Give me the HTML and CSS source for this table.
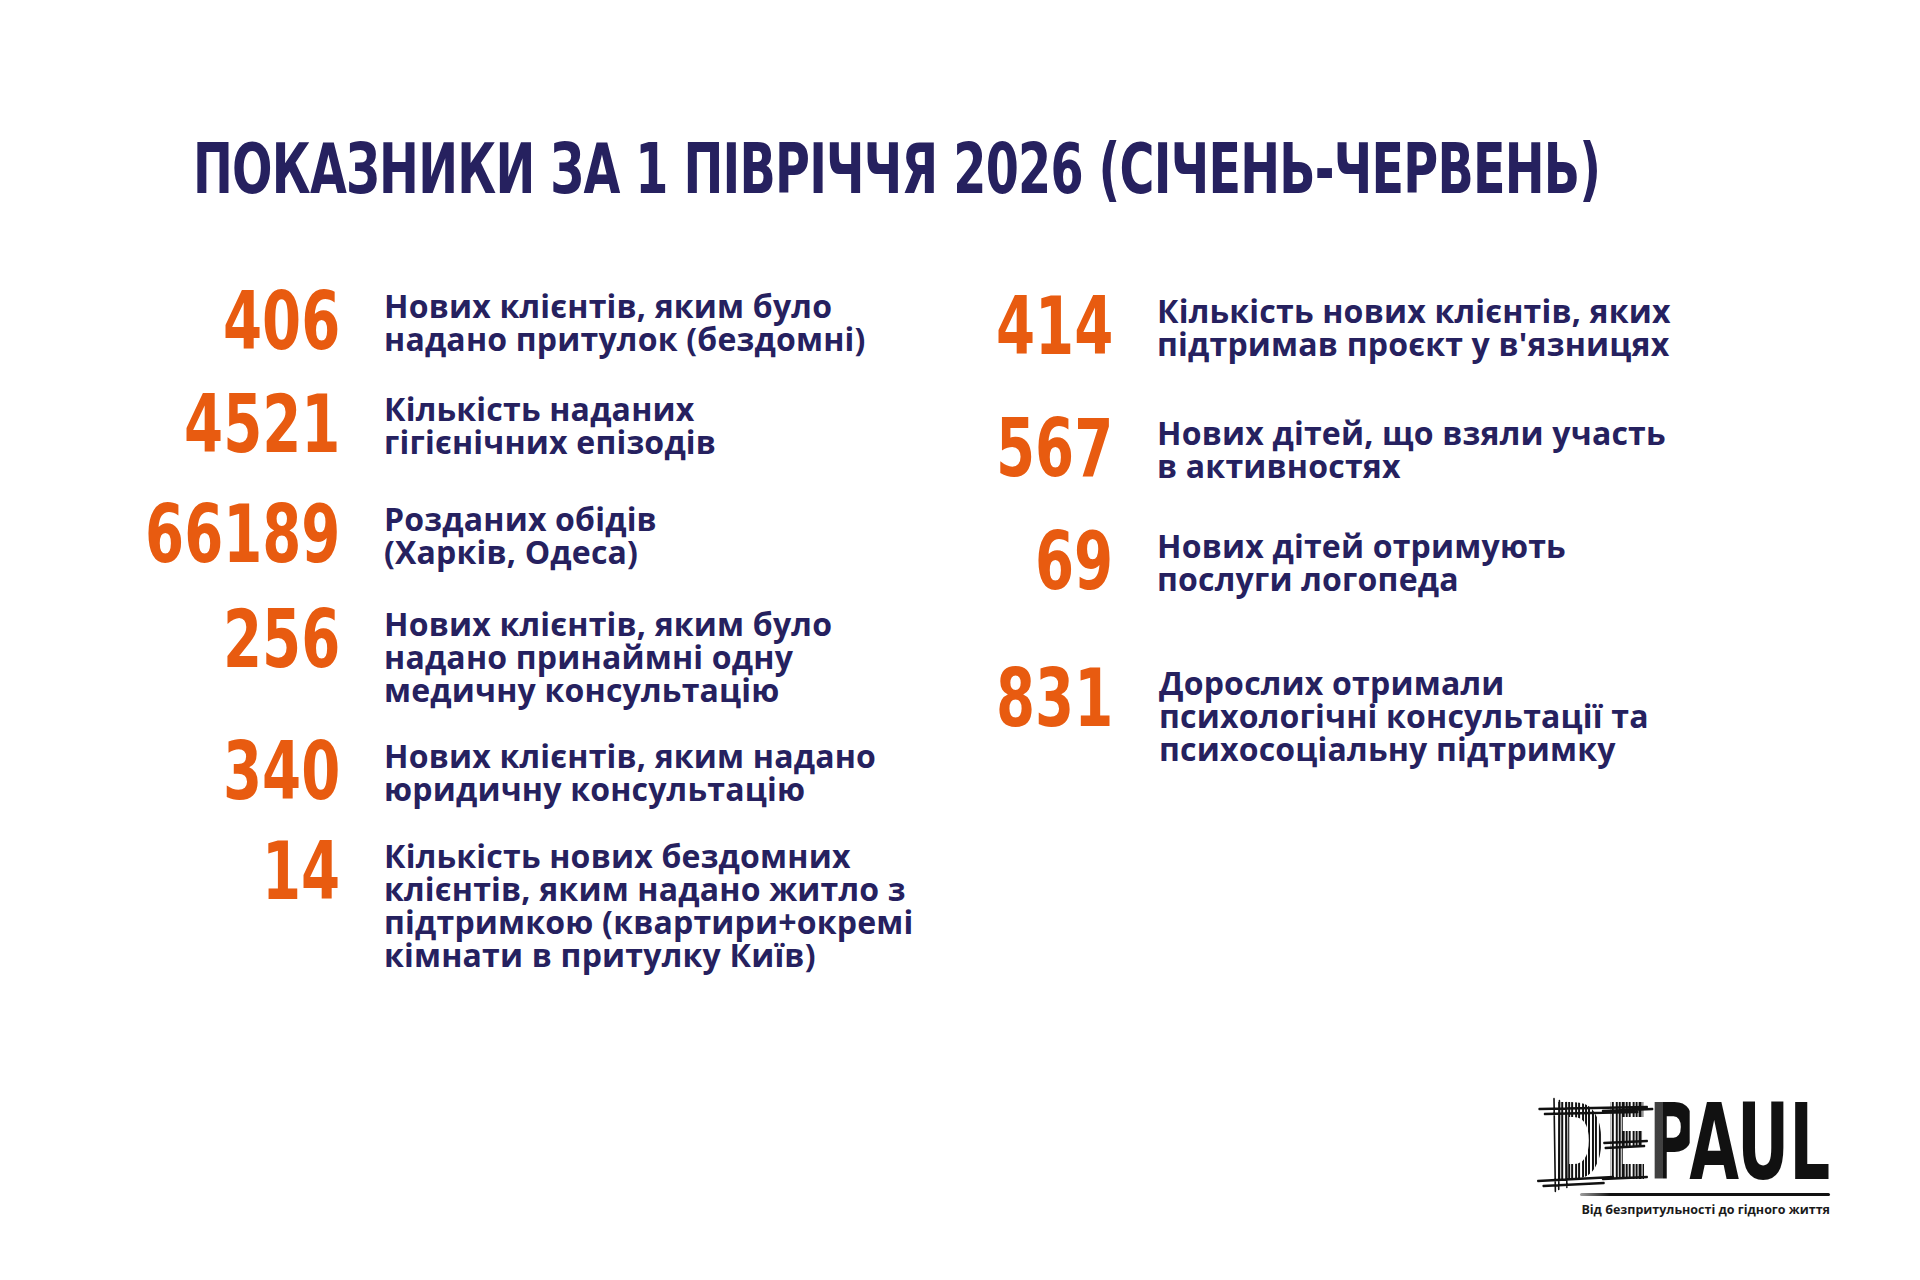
FILE: index.html
```html
<!DOCTYPE html>
<html lang="uk">
<head>
<meta charset="utf-8">
<title>Показники за 1 півріччя 2026</title>
<link rel="stylesheet" href="styles.css">
</head>
<body>
<div class="page">
  <h1 class="title"><span class="title-inner">ПОКАЗНИКИ ЗА 1 ПІВРІЧЧЯ 2026 (СІЧЕНЬ-ЧЕРВЕНЬ)</span></h1>
  <div class="stats">
    <div class="col col-left">
      <div class="stat">
        <div class="num"><span class="digits">406</span></div>
        <div class="txt">Нових клієнтів, яким було<br>надано притулок (бездомні)</div>
      </div>
      <div class="stat l2">
        <div class="num"><span class="digits">4521</span></div>
        <div class="txt">Кількість наданих<br>гігієнічних епізодів</div>
      </div>
      <div class="stat l3">
        <div class="num"><span class="digits">66189</span></div>
        <div class="txt">Розданих обідів<br>(Харків, Одеса)</div>
      </div>
      <div class="stat l4">
        <div class="num"><span class="digits">256</span></div>
        <div class="txt">Нових клієнтів, яким було<br>надано принаймні одну<br>медичну консультацію</div>
      </div>
      <div class="stat l5">
        <div class="num"><span class="digits">340</span></div>
        <div class="txt">Нових клієнтів, яким надано<br>юридичну консультацію</div>
      </div>
      <div class="stat l6">
        <div class="num"><span class="digits">14</span></div>
        <div class="txt">Кількість нових бездомних<br>клієнтів, яким надано житло з<br>підтримкою (квартири+окремі<br>кімнати в притулку Київ)</div>
      </div>
    </div>
    <div class="col col-right">
      <div class="stat">
        <div class="num"><span class="digits">414</span></div>
        <div class="txt">Кількість нових клієнтів, яких<br>підтримав проєкт у в'язницях</div>
      </div>
      <div class="stat r2">
        <div class="num"><span class="digits">567</span></div>
        <div class="txt">Нових дітей, що взяли участь<br>в активностях</div>
      </div>
      <div class="stat r3">
        <div class="num"><span class="digits">69</span></div>
        <div class="txt">Нових дітей отримують<br>послуги логопеда</div>
      </div>
      <div class="stat r4">
        <div class="num"><span class="digits">831</span></div>
        <div class="txt txt-shift">Дорослих отримали<br>психологічні консультації та<br>психосоціальну підтримку</div>
      </div>
    </div>
  </div>
  <footer class="logo">
    <div class="logo-word"><span class="sk">DE</span><span class="sk-p">P</span>AUL<svg class="scratch" viewBox="0 0 170 90" width="170" height="90" aria-hidden="true">
        <path d="M-10 6 L150 4 M-2 11 L136 9 M-12 78 L100 74 M-4 83 L86 80 M12 -4 L14 88 M20 -2 L19 86 M30 0 L31 84 M86 40 L150 38 M88 45 L146 43 M84 8 L158 6 M84 76 L150 74" stroke="#111" stroke-width="2.4" fill="none" stroke-linecap="round"/>
      </svg></div>
    <div class="logo-rule"></div>
    <div class="logo-tag">Від безпритульності до гідного життя</div>
  </footer>
</div>
</body>
</html>
```
FILE: styles.css
```css
html, body {
  margin: 0;
  padding: 0;
  background: #ffffff;
}

.page {
  width: 1920px;
  height: 1280px;
  box-sizing: border-box;
  padding: 134px 90px 62px 0;
  display: flex;
  flex-direction: column;
  overflow: hidden;
}

.title {
  margin: 0 0 0 193px;
  font-family: "DejaVu Sans Condensed", "Liberation Sans", sans-serif;
  font-weight: 700;
  font-size: 70px;
  line-height: 70px;
  color: #26215f;
  white-space: nowrap;
}

.title-inner {
  display: inline-block;
  letter-spacing: -1px;
  transform: scaleX(0.756);
  transform-origin: left center;
}

.stats {
  display: flex;
  margin-top: 85px;
  padding-left: 80px;
}

.col {
  display: flex;
  flex-direction: column;
}

.col-left {
  width: 773px;
  flex: none;
}

.col-right {
  flex: none;
  padding-top: 5px;
}

.stat {
  display: flex;
  align-items: flex-start;
}

.num {
  flex: none;
  width: 260px;
  margin-right: 44px;
  text-align: right;
  font-family: "DejaVu Sans Condensed", "Liberation Sans", sans-serif;
  font-weight: 700;
  font-size: 80px;
  line-height: 66px;
  color: #e85b10;
}

.digits {
  display: inline-block;
  transform: scaleX(0.78);
  transform-origin: right center;
}

.txt {
  font-family: "Open Sans", "Liberation Sans", sans-serif;
  font-weight: 700;
  font-size: 32px;
  line-height: 33px;
  letter-spacing: 0.2px;
  color: #26215f;
  white-space: nowrap;
}

.txt-shift {
  margin-left: 2px;
}

.l2 { margin-top: 37px; }
.l3 { margin-top: 44px; }
.l4 { margin-top: 39px; }
.l5 { margin-top: 33px; }
.l6 { margin-top: 34px; }

.r2 { margin-top: 56px; }
.r3 { margin-top: 47px; }
.r4 { margin-top: 71px; }

.logo {
  margin-top: auto;
  align-self: flex-end;
  width: 287px;
  display: flex;
  flex-direction: column;
}

.logo-word {
  position: relative;
  align-self: flex-end;
  width: max-content;
  font-family: "DejaVu Sans Condensed", "Liberation Sans", sans-serif;
  font-weight: 700;
  font-size: 106px;
  line-height: 80px;
  color: #111111;
  white-space: nowrap;
  transform: scaleX(0.675);
  transform-origin: right top;
}

.sk,
.sk-p {
  background: repeating-linear-gradient(90deg, #111 0 3px, rgba(255,255,255,0) 3px 5px);
  -webkit-background-clip: text;
  background-clip: text;
  color: transparent;
}

.sk-p {
  background: linear-gradient(90deg, rgba(17,17,17,0.8) 0 35%, #111 35% 100%);
  -webkit-background-clip: text;
  background-clip: text;
}

.scratch {
  position: absolute;
  left: -8px;
  top: 0;
  overflow: visible;
}

.logo-rule {
  margin: 10px 0 0 37px;
  height: 3px;
  background: linear-gradient(90deg, rgba(17,17,17,0.4), #111 12%, #111);
  border-radius: 2px;
}

.logo-tag {
  margin-top: 6px;
  text-align: right;
  font-family: "Open Sans", "Liberation Sans", sans-serif;
  font-weight: 700;
  font-size: 12.5px;
  line-height: 16px;
  color: #1a1a1a;
  white-space: nowrap;
}
```
